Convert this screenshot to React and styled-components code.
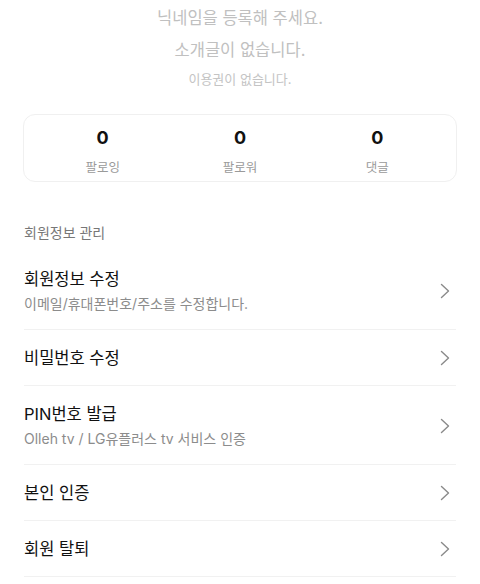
import React from "react";
import styled, { createGlobalStyle } from "styled-components";

const GlobalStyle = createGlobalStyle`
  html, body {
    margin: 0;
    padding: 0;
    background: #fff;
  }
  body {
    font-family: Inter, "Noto Sans CJK KR", sans-serif;
    color: #111;
    -webkit-font-smoothing: antialiased;
  }
`;

const Page = styled.div`
  width: 480px;
  padding: 6px 24px 0;
  box-sizing: border-box;
`;

const Profile = styled.div`
  display: flex;
  flex-direction: column;
  align-items: center;
  gap: 8px;
`;

const Placeholder = styled.div`
  font-size: ${(p) => (p.small ? "13px" : "16.5px")};
  line-height: ${(p) => (p.small ? "18px" : "24px")};
  color: ${(p) => (p.small ? "#c4c4c4" : "#c0c0c0")};
`;

const StatsCard = styled.div`
  margin: 26px -1px 0;
  border: 1px solid #f0f0f0;
  border-radius: 12px;
  padding: 11px 10px 4px;
  display: grid;
  grid-template-columns: repeat(3, 1fr);
`;

const Stat = styled.div`
  display: flex;
  flex-direction: column;
  align-items: center;
  gap: 9px;
`;

const StatValue = styled.div`
  font-weight: 700;
  font-size: 18px;
  line-height: 24px;
  color: #111;
`;

const StatLabel = styled.div`
  font-size: 12.5px;
  line-height: 18px;
  color: #9a9a9a;
`;

const SectionTitle = styled.div`
  margin-top: 41px;
  font-size: 14px;
  line-height: 20px;
  color: #777;
`;

const List = styled.ul`
  list-style: none;
  margin: 8px 0 0;
  padding: 0;
`;

const Row = styled.li`
  display: flex;
  align-items: center;
  justify-content: space-between;
  padding: 16px 0 15px;
  border-bottom: 1px solid #f1f1f1;
`;

const RowText = styled.div`
  display: flex;
  flex-direction: column;
  gap: 3px;
`;

const RowTitle = styled.div`
  font-size: 16.5px;
  line-height: 24px;
  color: #111;
`;

const RowSub = styled.div`
  font-size: 14px;
  line-height: 20px;
  color: #8c8c8c;
`;

const Chevron = styled.svg`
  width: 10px;
  height: 16px;
  margin-right: 6px;
  flex-shrink: 0;
`;

const Arrow = () => (
  <Chevron viewBox="0 0 10 16" fill="none">
    <polyline
      points="1.5,1.5 8.5,8 1.5,14.5"
      stroke="#8a8a8a"
      strokeWidth="1.4"
      strokeLinecap="round"
      strokeLinejoin="round"
    />
  </Chevron>
);

const stats = [
  { label: "팔로잉", value: 0 },
  { label: "팔로워", value: 0 },
  { label: "댓글", value: 0 },
];

const menu = [
  { title: "회원정보 수정", sub: "이메일/휴대폰번호/주소를 수정합니다." },
  { title: "비밀번호 수정" },
  { title: "PIN번호 발급", sub: "Olleh tv / LG유플러스 tv 서비스 인증" },
  { title: "본인 인증" },
  { title: "회원 탈퇴" },
];

export default function App() {
  return (
    <>
      <GlobalStyle />
      <Page>
        <Profile>
          <Placeholder>닉네임을 등록해 주세요.</Placeholder>
          <Placeholder>소개글이 없습니다.</Placeholder>
          <Placeholder small>이용권이 없습니다.</Placeholder>
        </Profile>

        <StatsCard>
          {stats.map((s) => (
            <Stat key={s.label}>
              <StatValue>{s.value}</StatValue>
              <StatLabel>{s.label}</StatLabel>
            </Stat>
          ))}
        </StatsCard>

        <SectionTitle>회원정보 관리</SectionTitle>
        <List>
          {menu.map((m) => (
            <Row key={m.title}>
              <RowText>
                <RowTitle>{m.title}</RowTitle>
                {m.sub && <RowSub>{m.sub}</RowSub>}
              </RowText>
              <Arrow />
            </Row>
          ))}
        </List>
      </Page>
    </>
  );
}
